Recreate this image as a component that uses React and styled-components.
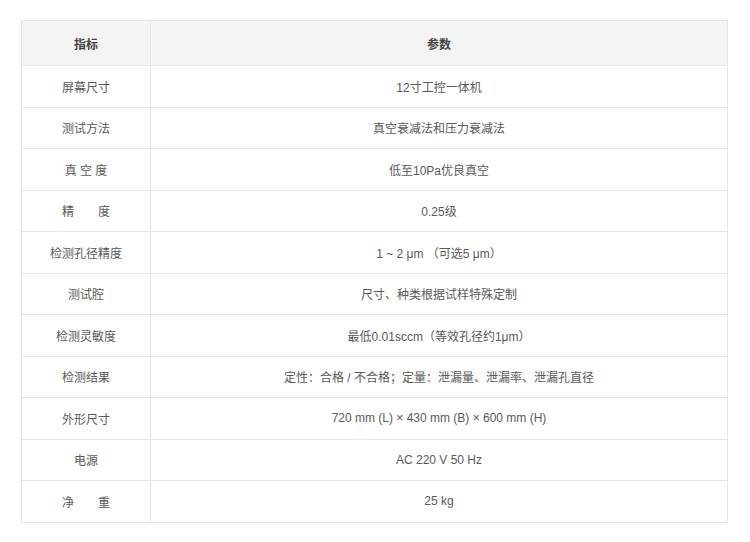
import React from "react";
import styled, { createGlobalStyle } from "styled-components";

const GlobalStyle = createGlobalStyle`
  body {
    margin: 0;
    background: #ffffff;
    font-family: "Liberation Sans", Arial, "Noto Sans CJK SC", sans-serif;
  }
`;

const Page = styled.div`
  width: 750px;
  height: 542px;
  padding: 20px 0 0 21px;
  box-sizing: border-box;
`;

const Table = styled.table`
  width: 707px;
  border-collapse: collapse;
  table-layout: fixed;
  font-size: 12px;
  color: #595959;
`;

const HeadCell = styled.th`
  height: 44px;
  background: #f4f4f4;
  border: 1px solid #e6e6e6;
  font-weight: bold;
  color: #444444;
  text-align: center;
  vertical-align: middle;
  padding: 0;
  width: ${(p) => p.w || "auto"};
`;

const Cell = styled.td`
  height: 40.5px;
  border: 1px solid #e6e6e6;
  text-align: center;
  vertical-align: middle;
  padding: 0;
  white-space: pre;
`;

const rows = [
  ["屏幕尺寸", "12寸工控一体机"],
  ["测试方法", "真空衰减法和压力衰减法"],
  ["真 空 度", "低至10Pa优良真空"],
  ["精　　度", "0.25级"],
  ["检测孔径精度", "1 ~ 2 μm （可选5 μm）"],
  ["测试腔", "尺寸、种类根据试样特殊定制"],
  ["检测灵敏度", "最低0.01sccm（等效孔径约1μm）"],
  ["检测结果", "定性：合格 / 不合格；定量：泄漏量、泄漏率、泄漏孔直径"],
  ["外形尺寸", "720 mm (L) × 430 mm (B) × 600 mm (H)"],
  ["电源", "AC 220 V 50 Hz"],
  ["净　　重", "25 kg"],
];

export default function App() {
  return (
    <>
      <GlobalStyle />
      <Page>
        <Table>
          <thead>
            <tr>
              <HeadCell w="128px">指标</HeadCell>
              <HeadCell>参数</HeadCell>
            </tr>
          </thead>
          <tbody>
            {rows.map(([k, v]) => (
              <tr key={k}>
                <Cell>{k}</Cell>
                <Cell>{v}</Cell>
              </tr>
            ))}
          </tbody>
        </Table>
      </Page>
    </>
  );
}
